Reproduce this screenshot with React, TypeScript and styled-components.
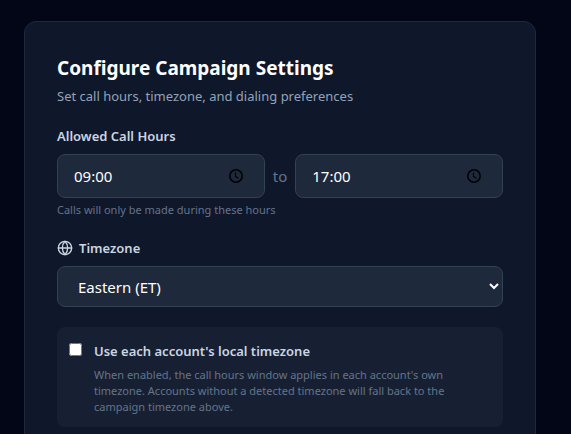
import React, { useState } from "react";
import styled, { createGlobalStyle } from "styled-components";
import { Globe } from "lucide-react";

const GlobalStyle = createGlobalStyle`
  *, *::before, *::after { box-sizing: border-box; }
  body {
    margin: 0;
    background: #020617;
    color: #ffffff;
    font-family: "Segoe UI", "Noto Sans", "Open Sans", sans-serif;
    font-size: 15px;
    line-height: 24px;
  }
  h1, p { margin: 0; }
  input, select, button { font: inherit; color: inherit; margin: 0; }
`;

const Page = styled.main`
  padding: 21px 35px 0 24px;
`;

const Card = styled.form`
  display: flex;
  flex-direction: column;
  gap: 20px;
  padding: 32px;
  background: #0f172a;
  border: 1px solid #1e293b;
  border-radius: 12px;
`;

const Title = styled.h1`
  font-size: 19px;
  line-height: 28px;
  font-weight: 700;
`;

const Subtitle = styled.p`
  margin-top: 4px;
  color: #94a3b8;
  font-size: 13px;
  line-height: 20px;
`;

const Field = styled.div`
  display: flex;
  flex-direction: column;
`;

const Label = styled.label`
  display: flex;
  align-items: center;
  gap: 6px;
  margin-bottom: 8px;
  color: #cbd5e1;
  font-size: 13px;
  line-height: 20px;
  font-weight: 600;
`;

const TimeRow = styled.div`
  display: flex;
  align-items: center;
  gap: 8px;
  color: #64748b;
`;

const TimeBox = styled.div`
  flex: 1;
  min-width: 0;
  display: flex;
  align-items: center;
  height: 44px;
  padding: 0 20px 0 16px;
  background: #1e293b;
  border: 1px solid #334155;
  border-radius: 8px;
  color: #ffffff;
`;

const TimeInput = styled.input`
  flex: 1;
  min-width: 0;
  padding: 0;
  border: 0;
  outline: 0;
  background: transparent;
`;

const ClockButton = styled.button`
  display: flex;
  padding: 0;
  border: 0;
  background: transparent;
  color: #000000;
  cursor: pointer;
`;

const Hint = styled.p`
  color: #64748b;
  font-size: 11px;
  line-height: 16px;
`;

const FieldHint = styled(Hint)`
  margin-top: 4px;
`;

const Select = styled.select`
  width: 100%;
  height: 41px;
  padding: 0 16px;
  background: #1e293b;
  border: 1px solid #334155;
  border-radius: 8px;
  color: #ffffff;
`;

const Option = styled.div`
  display: flex;
  align-items: flex-start;
  gap: 12px;
  padding: 12px;
  background: #172033;
  border-radius: 8px;
`;

const Checkbox = styled.input`
  flex: none;
  width: 13px;
  height: 13px;
  && { margin-top: 4px; }
`;

const OptionLabel = styled.label`
  display: block;
  margin-bottom: 4px;
  color: #cbd5e1;
  font-size: 13px;
  line-height: 24px;
  font-weight: 600;
`;

const ClockIcon = () => (
  <svg width="16" height="16" viewBox="0 0 16 16" fill="none" stroke="currentColor" aria-hidden="true">
    <circle cx="8" cy="8" r="6.2" strokeWidth="1.5" />
    <path d="M7.5 4.5v4l3 1.8" strokeWidth="1.1" />
  </svg>
);

type TimeFieldProps = { id: string; name: string; initial: string };

function TimeField({ id, name, initial }: TimeFieldProps) {
  const [value, setValue] = useState(initial);
  return (
    <TimeBox>
      <TimeInput
        id={id}
        aria-label={name}
        inputMode="numeric"
        pattern="[0-2][0-9]:[0-5][0-9]"
        value={value}
        onChange={(e) => setValue(e.target.value)}
      />
      <ClockButton type="button" aria-label={`Pick ${name.toLowerCase()}`}>
        <ClockIcon />
      </ClockButton>
    </TimeBox>
  );
}

export default function App() {
  return (
    <>
      <GlobalStyle />
      <Page>
        <Card>
          <header>
            <Title>Configure Campaign Settings</Title>
            <Subtitle>Set call hours, timezone, and dialing preferences</Subtitle>
          </header>

          <Field>
            <Label htmlFor="start">Allowed Call Hours</Label>
            <TimeRow>
              <TimeField id="start" name="Start time" initial="09:00" />
              <span>to</span>
              <TimeField id="end" name="End time" initial="17:00" />
            </TimeRow>
            <FieldHint>Calls will only be made during these hours</FieldHint>
          </Field>

          <Field>
            <Label htmlFor="timezone">
              <Globe size={16} aria-hidden="true" />
              Timezone
            </Label>
            <Select id="timezone" defaultValue="ET">
              <option value="ET">Eastern (ET)</option>
              <option value="CT">Central (CT)</option>
              <option value="MT">Mountain (MT)</option>
              <option value="PT">Pacific (PT)</option>
            </Select>
          </Field>

          <Option>
            <Checkbox type="checkbox" id="local" aria-describedby="local-hint" />
            <div>
              <OptionLabel htmlFor="local">Use each account's local timezone</OptionLabel>
              <Hint id="local-hint">
                When enabled, the call hours window applies in each account's own timezone. Accounts
                without a detected timezone will fall back to the campaign timezone above.
              </Hint>
            </div>
          </Option>
        </Card>
      </Page>
    </>
  );
}
